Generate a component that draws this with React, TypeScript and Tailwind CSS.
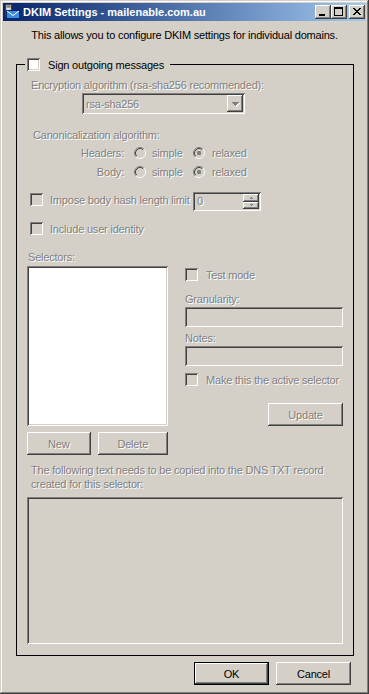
import React from 'react';

const raised =
  'shadow-[inset_-1px_-1px_#404040,inset_1px_1px_#ffffff,inset_-2px_-2px_#808080,inset_2px_2px_#d4d0c8]';
const sunken =
  'shadow-[inset_1px_1px_#808080,inset_-1px_-1px_#ffffff,inset_2px_2px_#404040,inset_-2px_-2px_#d4d0c8]';
const dim = 'text-[#808080] [text-shadow:1px_1px_0_#ffffff]';

const Check = ({ enabled = false, className = '' }: { enabled?: boolean; className?: string }) => (
  <div
    className={`w-[13px] h-[13px] shrink-0 ${sunken} ${enabled ? 'bg-white' : 'bg-[#d4d0c8]'} ${className}`}
  />
);

const Radio = ({ checked = false }: { checked?: boolean }) => (
  <svg width="12" height="12" viewBox="0 0 12 12" className="shrink-0">
    <circle cx="6" cy="6" r="4" fill="#d4d0c8" />
    <path d="M2.11 9.89 A5.5 5.5 0 0 1 9.89 2.11" fill="none" stroke="#808080" />
    <path d="M9.89 2.11 A5.5 5.5 0 0 1 2.11 9.89" fill="none" stroke="#ffffff" />
    <path d="M2.82 9.18 A4.5 4.5 0 0 1 9.18 2.82" fill="none" stroke="#404040" />
    <path d="M9.18 2.82 A4.5 4.5 0 0 1 2.82 9.18" fill="none" stroke="#d4d0c8" />
    {checked && <rect x="4" y="4" width="4" height="4" rx="1.2" fill="#808080" />}
  </svg>
);

const Btn = ({
  children,
  className = '',
  disabled = true,
}: {
  children: React.ReactNode;
  className?: string;
  disabled?: boolean;
}) => (
  <div className={`h-[23px] flex items-center justify-center ${raised} ${disabled ? dim : ''} ${className}`}>
    {children}
  </div>
);

const CanonRow = ({ label }: { label: string }) => (
  <div className={`flex items-center h-[14px] ${dim}`}>
    <span className="w-[107px] text-right">{label}</span>
    <span className="ml-[10px]">
      <Radio />
    </span>
    <span className="ml-[6px] w-[41px]">simple</span>
    <Radio checked />
    <span className="ml-[7px]">relaxed</span>
  </div>
);

const TitleIcon = () => (
  <svg width="16" height="16" viewBox="0 0 16 16" className="shrink-0">
    <rect x="1.5" y="0.5" width="6" height="12" fill="#c0c0c0" stroke="#404040" />
    <rect x="2.5" y="1.5" width="4" height="2" fill="#808080" />
    <rect x="2.5" y="4.5" width="4" height="1" fill="#ffffff" />
    <rect x="2.5" y="6.5" width="13" height="8" fill="#3a8ee6" stroke="#0a246a" />
    <path d="M3 7 L9 11.5 L15 7" fill="none" stroke="#ffffff" />
  </svg>
);

const CaptionBtn = ({ children, className = '' }: { children: React.ReactNode; className?: string }) => (
  <div className={`w-[16px] h-[14px] bg-[#d4d0c8] ${raised} flex items-center justify-center ${className}`}>
    <svg width="16" height="14" viewBox="0 0 16 14" shapeRendering="crispEdges">
      {children}
    </svg>
  </div>
);

const closePixels = [0, 1, 2, 3, 4, 5, 6];

export default function App() {
  return (
    <div className="w-[369px] h-[694px] bg-[#d4d0c8] p-[3px] flex flex-col shadow-[inset_-1px_-1px_#404040,inset_1px_1px_#d4d0c8,inset_-2px_-2px_#808080,inset_2px_2px_#ffffff] font-['Liberation_Sans',Arial,sans-serif] text-[11px] leading-[14px] tracking-[-0.2px] text-black select-none">
      {/* Title bar */}
      <div className="h-[18px] bg-linear-to-r from-[#0a246a] to-[#a6caf0] flex items-center pl-[1px] pr-[1px]">
        <TitleIcon />
        <span className="ml-[3px] text-white font-bold text-[11px] tracking-normal whitespace-nowrap">
          DKIM Settings - mailenable.com.au
        </span>
        <div className="ml-auto flex items-center">
          <CaptionBtn>
            <rect x="4" y="9" width="6" height="2" fill="#000" />
          </CaptionBtn>
          <CaptionBtn>
            <rect x="3" y="2" width="9" height="2" fill="#000" />
            <rect x="3" y="4" width="1" height="6" fill="#000" />
            <rect x="11" y="4" width="1" height="6" fill="#000" />
            <rect x="3" y="10" width="9" height="1" fill="#000" />
          </CaptionBtn>
          <CaptionBtn className="ml-[2px]">
            {closePixels.map((i) => (
              <React.Fragment key={i}>
                <rect x={4 + i} y={3 + i} width="2" height="1" fill="#000" />
                <rect x={10 - i} y={3 + i} width="2" height="1" fill="#000" />
              </React.Fragment>
            ))}
          </CaptionBtn>
        </div>
      </div>

      <p className="mt-[7px] text-center whitespace-nowrap">
        This allows you to configure DKIM settings for individual domains.
      </p>

      {/* Group box */}
      <div className="mt-[22px] ml-[13px] w-[338px] border border-black flex flex-col pb-[11px]">
        <div className="-mt-[7px] ml-[8px] h-[13px] w-fit flex items-center bg-[#d4d0c8] pl-[2px] pr-[6px]">
          <Check enabled />
          <span className="ml-[8px] whitespace-nowrap">Sign outgoing messages</span>
        </div>

        <p className={`mt-[7px] ml-[14px] ${dim}`}>Encryption algorithm (rsa-sha256 recommended):</p>
        <div className={`mt-[1px] ml-[65px] w-[163px] h-[21px] ${sunken} bg-[#d4d0c8] flex items-center p-[2px]`}>
          <span className={`flex-1 pl-[2px] ${dim}`}>rsa-sha256</span>
          <div className={`w-[16px] h-[17px] ${raised} flex items-center justify-center`}>
            <svg width="9" height="6" viewBox="0 0 9 6" shapeRendering="crispEdges">
              <path d="M1 1 H8 V2 H7 V3 H6 V4 H5 V5 H4 V4 H3 V3 H2 V2 H1 Z" fill="#ffffff" transform="translate(1 1)" />
              <path d="M1 1 H8 V2 H7 V3 H6 V4 H5 V5 H4 V4 H3 V3 H2 V2 H1 Z" fill="#808080" />
            </svg>
          </div>
        </div>

        <p className={`mt-[14px] ml-[16px] ${dim}`}>Canonicalization algorithm:</p>
        <div className="mt-[4px]">
          <CanonRow label="Headers:" />
        </div>
        <div className="mt-[5px]">
          <CanonRow label="Body:" />
        </div>

        <div className="mt-[13px] ml-[13px] flex items-start h-[19px]">
          <Check className="mt-[1px]" />
          <span className={`ml-[7px] mt-[1px] w-[138px] whitespace-nowrap ${dim}`}>Impose body hash length limit</span>
          <div className={`ml-[5px] w-[68px] h-[19px] ${sunken} bg-[#d4d0c8] flex p-[2px]`}>
            <span className={`flex-1 pl-[2px] leading-[15px] ${dim}`}>0</span>
            <div className="w-[16px] flex flex-col">
              <div className={`h-[8px] ${raised} flex items-center justify-center`}>
                <svg width="5" height="3" viewBox="0 0 5 3" shapeRendering="crispEdges">
                  <path d="M2 0 H3 V1 H4 V2 H1 V1 H2 Z" fill="#808080" />
                </svg>
              </div>
              <div className={`h-[7px] ${raised} flex items-center justify-center`}>
                <svg width="5" height="3" viewBox="0 0 5 3" shapeRendering="crispEdges">
                  <path d="M1 0 H4 V1 H3 V2 H2 V1 H1 Z" fill="#808080" />
                </svg>
              </div>
            </div>
          </div>
        </div>

        <div className="mt-[11px] ml-[13px] flex items-center h-[13px]">
          <Check />
          <span className={`ml-[7px] ${dim}`}>Include user identity</span>
        </div>

        <p className={`mt-[15px] ml-[11px] ${dim}`}>Selectors:</p>
        <div className="mt-[2px] ml-[10px] flex">
          <div className="w-[141px] flex flex-col">
            <div className={`h-[160px] ${sunken} bg-white`} />
            <div className="mt-[6px] flex gap-[7px]">
              <Btn className="w-[64px]">New</Btn>
              <Btn className="w-[71px]">Delete</Btn>
            </div>
          </div>
          <div className="ml-[17px] w-[158px] flex flex-col">
            <div className="mt-[2px] flex items-center h-[13px]">
              <Check />
              <span className={`ml-[8px] ${dim}`}>Test mode</span>
            </div>
            <p className={`mt-[11px] ${dim}`}>Granularity:</p>
            <div className={`mt-[1px] h-[20px] ${sunken} bg-[#d4d0c8]`} />
            <p className={`mt-[4px] ${dim}`}>Notes:</p>
            <div className={`mt-[1px] h-[20px] ${sunken} bg-[#d4d0c8]`} />
            <div className="mt-[7px] flex items-center h-[13px]">
              <Check />
              <span className={`ml-[8px] whitespace-nowrap ${dim}`}>Make this the active selector</span>
            </div>
            <Btn className="mt-[17px] w-[75px] self-end">Update</Btn>
          </div>
        </div>

        <p className={`mt-[8px] ml-[14px] ${dim}`}>
          The following text needs to be copied into the DNS TXT record
          <br />
          created for this selector:
        </p>
        <div className={`mt-[6px] ml-[10px] w-[316px] h-[147px] ${sunken} bg-[#d4d0c8]`} />
      </div>

      {/* Footer buttons */}
      <div className="mt-[6px] flex justify-end gap-[7px] pr-[15px]">
        <Btn
          disabled={false}
          className="w-[75px] shadow-[inset_0_0_0_1px_#000000,inset_-2px_-2px_#404040,inset_2px_2px_#ffffff,inset_-3px_-3px_#808080]"
        >
          OK
        </Btn>
        <Btn disabled={false} className="w-[75px]">
          Cancel
        </Btn>
      </div>
    </div>
  );
}
